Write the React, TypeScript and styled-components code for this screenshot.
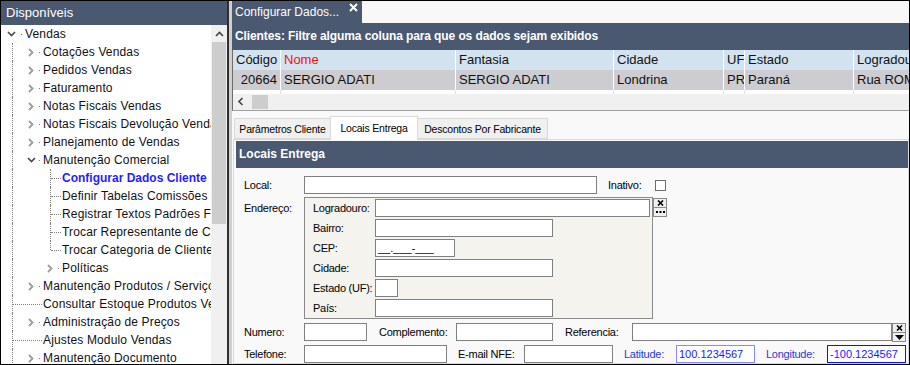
import React from 'react';
import styled, { createGlobalStyle } from 'styled-components';

const GlobalStyle = createGlobalStyle`
  body {
    margin: 0;
    font-family: 'Liberation Sans', Arial, sans-serif;
    background: #ffffff;
  }
  * {
    box-sizing: border-box;
  }
`;

interface TreeItem {
  label: string;
  level: number;
  kind: 'open' | 'closed' | 'leaf';
  selected?: boolean;
  last?: boolean;
}

const tree: TreeItem[] = [
  { label: 'Vendas', level: 0, kind: 'open' },
  { label: 'Cotações Vendas', level: 1, kind: 'closed' },
  { label: 'Pedidos Vendas', level: 1, kind: 'closed' },
  { label: 'Faturamento', level: 1, kind: 'closed' },
  { label: 'Notas Fiscais Vendas', level: 1, kind: 'closed' },
  { label: 'Notas Fiscais Devolução Vendas', level: 1, kind: 'closed' },
  { label: 'Planejamento de Vendas', level: 1, kind: 'closed' },
  { label: 'Manutenção Comercial', level: 1, kind: 'open' },
  { label: 'Configurar Dados Cliente', level: 2, kind: 'leaf', selected: true },
  { label: 'Definir Tabelas Comissões', level: 2, kind: 'leaf' },
  { label: 'Registrar Textos Padrões Faturamento', level: 2, kind: 'leaf' },
  { label: 'Trocar Representante de Cliente', level: 2, kind: 'leaf' },
  { label: 'Trocar Categoria de Cliente', level: 2, kind: 'leaf', last: true },
  { label: 'Políticas', level: 2, kind: 'closed' },
  { label: 'Manutenção Produtos / Serviços', level: 1, kind: 'closed' },
  { label: 'Consultar Estoque Produtos Vendas', level: 1, kind: 'leaf' },
  { label: 'Administração de Preços', level: 1, kind: 'closed' },
  { label: 'Ajustes Modulo Vendas', level: 1, kind: 'leaf' },
  { label: 'Manutenção Documento', level: 1, kind: 'closed' },
];

// colunas do grid de clientes
const columns = [
  { title: 'Código', width: 48, value: '20664', right: true },
  { title: 'Nome', width: 175, value: 'SERGIO ADATI', red: true },
  { title: 'Fantasia', width: 158, value: 'SERGIO ADATI' },
  { title: 'Cidade', width: 110, value: 'Londrina' },
  { title: 'UF', width: 21, value: 'PR' },
  { title: 'Estado', width: 109, value: 'Paraná' },
  { title: 'Logradouro', width: 80, value: 'Rua ROMANO' },
];

function ChevronRight() {
  return (
    <svg width="6" height="9" viewBox="0 0 6 9">
      <path d="M1 1 L4.5 4.5 L1 8" fill="none" stroke="#9c9c9c" strokeWidth="1.8" />
    </svg>
  );
}

function ChevronDown() {
  return (
    <svg width="9" height="6" viewBox="0 0 9 6">
      <path d="M1 1 L4.5 4.5 L8 1" fill="none" stroke="#4a4a4a" strokeWidth="1.7" />
    </svg>
  );
}

function TreeRow({ item }: { item: TreeItem }) {
  const toggle = item.kind === 'open' ? <ChevronDown /> : <ChevronRight />;

  if (item.level === 0) {
    return (
      <Row>
        <Toggle $width={20}>{toggle}</Toggle>
        <Dot />
        <Label>{item.label}</Label>
      </Row>
    );
  }

  if (item.level === 1) {
    return (
      <Row>
        <Guide $width={12} />
        {item.kind === 'leaf' ? (
          <HLine $width={29} />
        ) : (
          <>
            <Toggle $width={26} $pad={item.kind === 'open' ? 14 : 15}>{toggle}</Toggle>
            <Dot />
          </>
        )}
        <Label>{item.label}</Label>
      </Row>
    );
  }

  return (
    <Row>
      <Guide $width={12} />
      {item.kind === 'leaf' ? (
        <>
          <Guide $width={38} $half={item.last} />
          <HLine $width={10} />
        </>
      ) : (
        <>
          <Toggle $width={45} $pad={34}>{toggle}</Toggle>
          <Dot />
        </>
      )}
      <Label $selected={item.selected}>{item.label}</Label>
    </Row>
  );
}

function CloseIcon() {
  return (
    <svg width="9" height="9" viewBox="0 0 9 9">
      <path d="M1 1 L8 8 M8 1 L1 8" stroke="#ffffff" strokeWidth="2" />
    </svg>
  );
}

function SideButtons({ bottom }: { bottom: 'dots' | 'arrow' }) {
  return (
    <ButtonStack>
      <MiniButton>
        <svg width="7" height="6" viewBox="0 0 7 6">
          <path d="M1 0.5 L6 5.5 M6 0.5 L1 5.5" stroke="#000" strokeWidth="1.6" />
        </svg>
      </MiniButton>
      <MiniButton>
        {bottom === 'dots' ? (
          <svg width="9" height="2" viewBox="0 0 9 2">
            <rect x="0" y="0" width="2" height="2" fill="#000" />
            <rect x="3.5" y="0" width="2" height="2" fill="#000" />
            <rect x="7" y="0" width="2" height="2" fill="#000" />
          </svg>
        ) : (
          <svg width="9" height="5" viewBox="0 0 9 5">
            <path d="M0 0 L9 0 L4.5 5 Z" fill="#000" />
          </svg>
        )}
      </MiniButton>
    </ButtonStack>
  );
}

export default function App() {
  return (
    <>
      <GlobalStyle />
      <Window>
        <SidePanel>
          <SideHeader>Disponíveis</SideHeader>
          <TreeArea>
            <TreeList>
              {tree.map((item) => (
                <TreeRow key={item.label} item={item} />
              ))}
            </TreeList>
            <VScroll>
              <ScrollArrow>
                <svg width="9" height="6" viewBox="0 0 9 6">
                  <path d="M1 5 L4.5 1.5 L8 5" fill="none" stroke="#444" strokeWidth="1.6" />
                </svg>
              </ScrollArrow>
              <VThumb />
            </VScroll>
          </TreeArea>
        </SidePanel>

        <Splitter />

        <Main>
          <DocTabs>
            <DocTab>
              <span>Configurar Dados...</span>
              <CloseIcon />
            </DocTab>
          </DocTabs>

          <TitleBar>Clientes: Filtre alguma coluna para que os dados sejam exibidos</TitleBar>

          <Grid>
            <GridRow $bg="#d3e2ef">
              {columns.map((c) => (
                <Cell key={c.title} $width={c.width} $red={c.red}>
                  {c.title}
                </Cell>
              ))}
            </GridRow>
            <GridRow $bg="#cdcdd1">
              {columns.map((c) => (
                <Cell key={c.title} $width={c.width} $right={c.right}>
                  {c.value}
                </Cell>
              ))}
            </GridRow>
            <StubRow>
              {columns.map((c) => (
                <StubCell key={c.title} $width={c.width} />
              ))}
            </StubRow>
            <HScroll>
              <svg width="7" height="9" viewBox="0 0 7 9">
                <path d="M5.5 1 L2 4.5 L5.5 8" fill="none" stroke="#444" strokeWidth="1.6" />
              </svg>
              <HThumb />
            </HScroll>
          </Grid>

          <PageTabs>
            <PageTab $width={97}>Parâmetros Cliente</PageTab>
            <PageTab $width={88} $active>
              Locais Entrega
            </PageTab>
            <PageTab $width={131}>Descontos Por Fabricante</PageTab>
          </PageTabs>

          <PageBody>
            <SectionHeader>Locais Entrega</SectionHeader>
            <Form>
              <FormRow $top={8}>
                <FieldLabel $width={60}>Local:</FieldLabel>
                <Input $width={293} />
                <FieldLabel $width={47} $gap={11}>
                  Inativo:
                </FieldLabel>
                <Check />
              </FormRow>

              <FormRow $top={3} $tall>
                <FieldLabel $width={60} $offset={2}>
                  Endereço:
                </FieldLabel>
                <AddressBox>
                  <FormRow>
                    <FieldLabel $width={62}>Logradouro:</FieldLabel>
                    <Input $width={275} />
                  </FormRow>
                  <FormRow $top={2}>
                    <FieldLabel $width={62}>Bairro:</FieldLabel>
                    <Input $width={178} />
                  </FormRow>
                  <FormRow $top={2}>
                    <FieldLabel $width={62}>CEP:</FieldLabel>
                    <Input $width={80}>__.___-___</Input>
                  </FormRow>
                  <FormRow $top={2}>
                    <FieldLabel $width={62}>Cidade:</FieldLabel>
                    <Input $width={178} />
                  </FormRow>
                  <FormRow $top={2}>
                    <FieldLabel $width={62}>Estado (UF):</FieldLabel>
                    <Input $width={23} />
                  </FormRow>
                  <FormRow $top={2}>
                    <FieldLabel $width={62}>País:</FieldLabel>
                    <Input $width={178} />
                  </FormRow>
                </AddressBox>
                <SideButtons bottom="dots" />
              </FormRow>

              <FormRow $top={3}>
                <FieldLabel $width={60}>Numero:</FieldLabel>
                <Input $width={63} />
                <FieldLabel $width={77} $gap={12}>
                  Complemento:
                </FieldLabel>
                <Input $width={97} />
                <FieldLabel $width={67} $gap={12}>
                  Referencia:
                </FieldLabel>
                <Input $width={260} />
                <SideButtons bottom="arrow" />
              </FormRow>

              <FormRow $top={3}>
                <FieldLabel $width={60}>Telefone:</FieldLabel>
                <Input $width={143} />
                <FieldLabel $width={66} $gap={11}>
                  E-mail NFE:
                </FieldLabel>
                <Input $width={89} />
                <FieldLabel $width={52} $gap={11} $blue>
                  Latitude:
                </FieldLabel>
                <Input $width={79} $border="#8a8aff" $blue>
                  100.1234567
                </Input>
                <FieldLabel $width={61} $gap={11} $blue>
                  Longitude:
                </FieldLabel>
                <Input $width={79} $border="#1010ff" $blue>
                  -100.1234567
                </Input>
              </FormRow>
            </Form>
          </PageBody>
        </Main>
      </Window>
    </>
  );
}

const Window = styled.div`
  display: flex;
  width: 910px;
  height: 365px;
  border: 1px solid #000;
  overflow: hidden;
  background: #ffffff;
`;

const SidePanel = styled.div`
  width: 226px;
  display: flex;
  flex-direction: column;
  flex-shrink: 0;
`;

const SideHeader = styled.div`
  height: 24px;
  line-height: 24px;
  padding-left: 5px;
  background: #4a5870;
  color: #ffffff;
  font-size: 13px;
`;

const TreeArea = styled.div`
  flex: 1;
  display: flex;
  min-height: 0;
`;

const TreeList = styled.div`
  flex: 1;
  min-width: 0;
  overflow: hidden;
  background: #ffffff;
`;

const Row = styled.div`
  height: 18px;
  display: flex;
  align-items: center;
  white-space: nowrap;
  font-size: 12px;
  letter-spacing: 0.15px;
  color: #111;
`;

const Toggle = styled.span<{ $width: number; $pad?: number }>`
  width: ${(p) => p.$width}px;
  height: 18px;
  display: flex;
  align-items: center;
  justify-content: ${(p) => (p.$pad ? 'flex-start' : 'center')};
  padding-left: ${(p) => p.$pad || 0}px;
  flex-shrink: 0;
`;

const Dot = styled.span`
  width: 1px;
  height: 1px;
  margin: 0 3px 0 0;
  background: #777;
  flex-shrink: 0;
`;

const Guide = styled.span<{ $width: number; $half?: boolean }>`
  width: ${(p) => p.$width}px;
  height: ${(p) => (p.$half ? '9px' : '18px')};
  align-self: flex-start;
  border-right: 1px dotted #808080;
  flex-shrink: 0;
`;

const HLine = styled.span<{ $width: number }>`
  width: ${(p) => p.$width}px;
  height: 1px;
  border-top: 1px dotted #808080;
  margin-right: 1px;
  flex-shrink: 0;
`;

const Label = styled.span<{ $selected?: boolean }>`
  color: ${(p) => (p.$selected ? '#1f1fff' : '#111')};
  font-weight: ${(p) => (p.$selected ? 'bold' : 'normal')};
  letter-spacing: ${(p) => (p.$selected ? '0' : '0.15px')};
`;

const VScroll = styled.div`
  width: 16px;
  background: #f0f0f0;
  display: flex;
  flex-direction: column;
  align-items: center;
`;

const ScrollArrow = styled.div`
  height: 17px;
  width: 100%;
  display: flex;
  align-items: center;
  justify-content: center;
  background: #f0f0f0;
`;

const VThumb = styled.div`
  width: 14px;
  height: 182px;
  background: #cdcdcd;
`;

const Splitter = styled.div`
  width: 5px;
  flex-shrink: 0;
  border-left: 2px solid #2f2f2f;
  background: #d0d0d0;
`;

const Main = styled.div`
  flex: 1;
  min-width: 0;
  display: flex;
  flex-direction: column;
  background: #f9f9f9;
  overflow: hidden;
`;

const DocTabs = styled.div`
  height: 22px;
  display: flex;
  background: #f8f8f8;
`;

const DocTab = styled.div`
  width: 130px;
  display: flex;
  justify-content: space-between;
  align-items: flex-start;
  padding: 4px 4px 0 3px;
  background: #4a5870;
  color: #ffffff;
  font-size: 12px;
  svg {
    margin-top: -2px;
  }
`;

const TitleBar = styled.div`
  height: 27px;
  line-height: 27px;
  padding-left: 3px;
  background: #4a5870;
  color: #ffffff;
  font-size: 12px;
  font-weight: bold;
  letter-spacing: -0.1px;
  white-space: nowrap;
`;

const Grid = styled.div`
  border-left: 1px solid #6d6d6d;
  border-bottom: 1px solid #a0a0a0;
  background: #ffffff;
`;

const GridRow = styled.div<{ $bg: string }>`
  display: flex;
  height: 20px;
  background: ${(p) => p.$bg};
`;

const Cell = styled.div<{ $width: number; $red?: boolean; $right?: boolean }>`
  width: ${(p) => p.$width}px;
  flex-shrink: 0;
  padding: 0 3px;
  line-height: 20px;
  border-right: 1px solid #ffffff;
  font-size: 13px;
  color: ${(p) => (p.$red ? '#ee1111' : '#111')};
  text-align: ${(p) => (p.$right ? 'right' : 'left')};
  white-space: nowrap;
  overflow: hidden;
`;

const StubRow = styled.div`
  display: flex;
  height: 4px;
`;

const StubCell = styled.div<{ $width: number }>`
  width: ${(p) => p.$width}px;
  flex-shrink: 0;
  border-right: 1px solid #e3e3e3;
`;

const HScroll = styled.div`
  height: 16px;
  display: flex;
  align-items: center;
  gap: 8px;
  padding-left: 4px;
  background: #f0f0f0;
`;

const HThumb = styled.div`
  width: 16px;
  height: 14px;
  background: #cdcdcd;
`;

const PageTabs = styled.div`
  display: flex;
  align-items: flex-end;
  height: 29px;
  padding-left: 2px;
`;

const PageTab = styled.div<{ $width: number; $active?: boolean }>`
  width: ${(p) => p.$width}px;
  height: ${(p) => (p.$active ? 24 : 21)}px;
  margin-bottom: ${(p) => (p.$active ? -1 : 0)}px;
  margin-right: -1px;
  display: flex;
  align-items: center;
  justify-content: center;
  padding-bottom: ${(p) => (p.$active ? 2 : 0)}px;
  background: ${(p) => (p.$active ? '#ffffff' : '#f0f0f0')};
  border: 1px solid #d9d9d9;
  border-bottom: ${(p) => (p.$active ? 'none' : '1px solid #d9d9d9')};
  position: relative;
  z-index: ${(p) => (p.$active ? 1 : 0)};
  font-size: 10.5px;
  letter-spacing: -0.2px;
  color: #000;
  white-space: nowrap;
`;

const PageBody = styled.div`
  flex: 1;
  margin-left: 1px;
  padding: 1px 0 0 2px;
  border: 1px solid #d9d9d9;
  background: #f9f9f9;
`;

const SectionHeader = styled.div`
  height: 27px;
  line-height: 27px;
  padding-left: 3px;
  background: #4a5870;
  color: #ffffff;
  font-size: 12px;
  font-weight: bold;
`;

const Form = styled.div`
  padding-left: 8px;
`;

const FormRow = styled.div<{ $top?: number; $tall?: boolean }>`
  display: flex;
  align-items: ${(p) => (p.$tall ? 'flex-start' : 'center')};
  margin-top: ${(p) => p.$top || 0}px;
`;

const FieldLabel = styled.span<{ $width: number; $gap?: number; $offset?: number; $blue?: boolean }>`
  width: ${(p) => p.$width}px;
  margin-left: ${(p) => p.$gap || 0}px;
  margin-top: ${(p) => p.$offset || 0}px;
  flex-shrink: 0;
  line-height: 18px;
  font-size: 11px;
  letter-spacing: -0.25px;
  color: ${(p) => (p.$blue ? '#2a3bd6' : '#000')};
  white-space: nowrap;
`;

const Input = styled.div<{ $width: number; $border?: string; $blue?: boolean }>`
  width: ${(p) => p.$width}px;
  height: 18px;
  flex-shrink: 0;
  padding: 0 2px;
  line-height: 16px;
  background: #ffffff;
  border: 1px solid ${(p) => p.$border || '#808080'};
  font-size: 11px;
  color: ${(p) => (p.$blue ? '#1a1aff' : '#000')};
  white-space: nowrap;
`;

const Check = styled.span`
  width: 11px;
  height: 11px;
  background: #ffffff;
  border: 1px solid #6d6d6d;
`;

const AddressBox = styled.div`
  width: 349px;
  height: 122px;
  padding: 1px 0 0 8px;
  background: #f4f3ee;
  border: 1px solid #8a8a8a;
`;

const ButtonStack = styled.div`
  display: flex;
  flex-direction: column;
  margin-top: 1px;
`;

const MiniButton = styled.div`
  width: 14px;
  height: 10px;
  display: flex;
  align-items: center;
  justify-content: center;
  background: #f0f0f0;
  border: 1px solid #8a8a8a;
  & + & {
    margin-top: -1px;
  }
`;
